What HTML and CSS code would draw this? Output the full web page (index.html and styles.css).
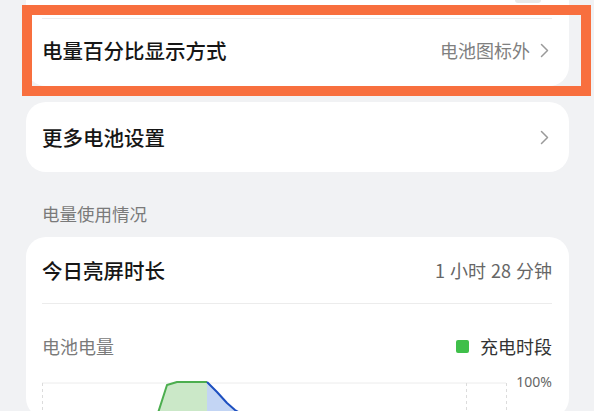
FILE: index.html
```html
<!DOCTYPE html>
<html lang="zh-CN">
<head>
<meta charset="utf-8">
<title>电池</title>
<link rel="stylesheet" href="styles.css">
</head>
<body>
<div class="page">
  <div class="card card-top">
    <div class="stub-row"><span class="stub"></span></div>
    <div class="row row-first">
      <span class="title">电量百分比显示方式</span>
      <span class="value">电池图标外
        <svg class="chev" width="9" height="15" viewBox="0 0 9 15"><polyline points="1.5,1.5 7.5,7.5 1.5,13.5" fill="none" stroke="#9a9a9a" stroke-width="1.5" stroke-linecap="round" stroke-linejoin="round"/></svg>
      </span>
    </div>
  </div>

  <div class="card">
    <div class="row row-single">
      <span class="title">更多电池设置</span>
      <span class="value">
        <svg class="chev" width="9" height="15" viewBox="0 0 9 15"><polyline points="1.5,1.5 7.5,7.5 1.5,13.5" fill="none" stroke="#9a9a9a" stroke-width="1.5" stroke-linecap="round" stroke-linejoin="round"/></svg>
      </span>
    </div>
  </div>

  <div class="section-label">电量使用情况</div>

  <div class="card card-usage">
    <div class="row row-usage">
      <span class="title">今日亮屏时长</span>
      <span class="value value-dark">1 小时 28 分钟</span>
    </div>
    <div class="legend-row">
      <span class="legend-label">电池电量</span>
      <span class="legend"><span class="swatch"></span>充电时段</span>
    </div>
    <svg class="chart" width="511" height="60" viewBox="0 0 511 60">
      <line x1="0" y1="25" x2="464" y2="25" stroke="#ececec" stroke-width="1"/>
      <line x1="0.5" y1="25" x2="0.5" y2="60" stroke="#dcdcdc" stroke-width="1" stroke-dasharray="3 3"/>
      <line x1="424.5" y1="25" x2="424.5" y2="60" stroke="#dcdcdc" stroke-width="1" stroke-dasharray="3 3"/>
      <line x1="464.5" y1="25" x2="464.5" y2="60" stroke="#dcdcdc" stroke-width="1" stroke-dasharray="3 3"/>
      <polygon points="116,55 125,27 135,24 165,24 165,55" fill="#cbe8c8"/>
      <polyline points="116,55 125,27 135,24 165,24" fill="none" stroke="#4cae4f" stroke-width="2" stroke-linejoin="round"/>
      <polygon points="165,24 175,34 185,45 193,52 198,55 165,55" fill="#c3d5f4"/>
      <polyline points="165,24 175,34 185,45 193,52 198,55" fill="none" stroke="#1d4fc0" stroke-width="2" stroke-linejoin="round"/>
      <text x="510" y="29" text-anchor="end" class="pct">100%</text>
    </svg>
  </div>

  <div class="highlight"></div>
</div>
</body>
</html>
```

FILE: styles.css
```css
html, body {
  margin: 0;
  padding: 0;
  background: #f1f2f4;
  height: 411px;
  overflow: hidden;
}

.page {
  position: relative;
  padding: 0 25px 0 26px;
  font-family: "Noto Sans CJK SC", "Noto Sans", sans-serif;
  color: #1a1a1a;
}

.card {
  background: #ffffff;
  border-radius: 20px;
  padding: 0 17px 0 16px;
  margin-top: 16px;
}

.card-top {
  margin-top: 0;
  border-radius: 0 0 20px 20px;
  padding-bottom: 5px;
}

.card-usage {
  margin-top: 0;
}

.stub-row {
  height: 18px;
  display: flex;
  justify-content: flex-end;
  border-bottom: 1px solid #ececec;
}

.stub {
  width: 26px;
  height: 3px;
  margin-right: 11px;
  background: #e9e9e9;
  border-radius: 0 0 3px 3px;
}

.row {
  display: flex;
  align-items: center;
  justify-content: space-between;
}

.row-first { height: 62px; }
.row-single { height: 70px; }
.row-usage {
  height: 66px;
  border-bottom: 1px solid #ececec;
}

.title {
  font-size: 20.5px;
  font-weight: 500;
  color: #161616;
}

.value {
  display: flex;
  align-items: center;
  font-size: 18px;
  color: #808080;
}

.value-dark {
  color: #666666;
  word-spacing: 1px;
}

.chev {
  margin-left: 10px;
  margin-right: 3px;
}

.section-label {
  padding: 30px 16px 11px 16px;
  line-height: 24px;
  font-size: 17.5px;
  color: #7a7a7a;
}

.legend-row {
  display: flex;
  justify-content: space-between;
  align-items: center;
  padding-top: 30px;
  height: 24px;
}

.legend-label {
  font-size: 18px;
  color: #7a7a7a;
}

.legend {
  display: flex;
  align-items: center;
  font-size: 18px;
  color: #333333;
}

.swatch {
  width: 13px;
  height: 13px;
  border-radius: 2px;
  background: #3fbf4a;
  margin-right: 11px;
}

.chart {
  display: block;
}

.pct {
  font-family: "Noto Sans", "Roboto", sans-serif;
  font-size: 14px;
  fill: #666666;
}

.highlight {
  position: absolute;
  left: 22px;
  top: 5px;
  width: 549px;
  height: 71px;
  border: 10px solid #f86f3e;
  pointer-events: none;
}
```
